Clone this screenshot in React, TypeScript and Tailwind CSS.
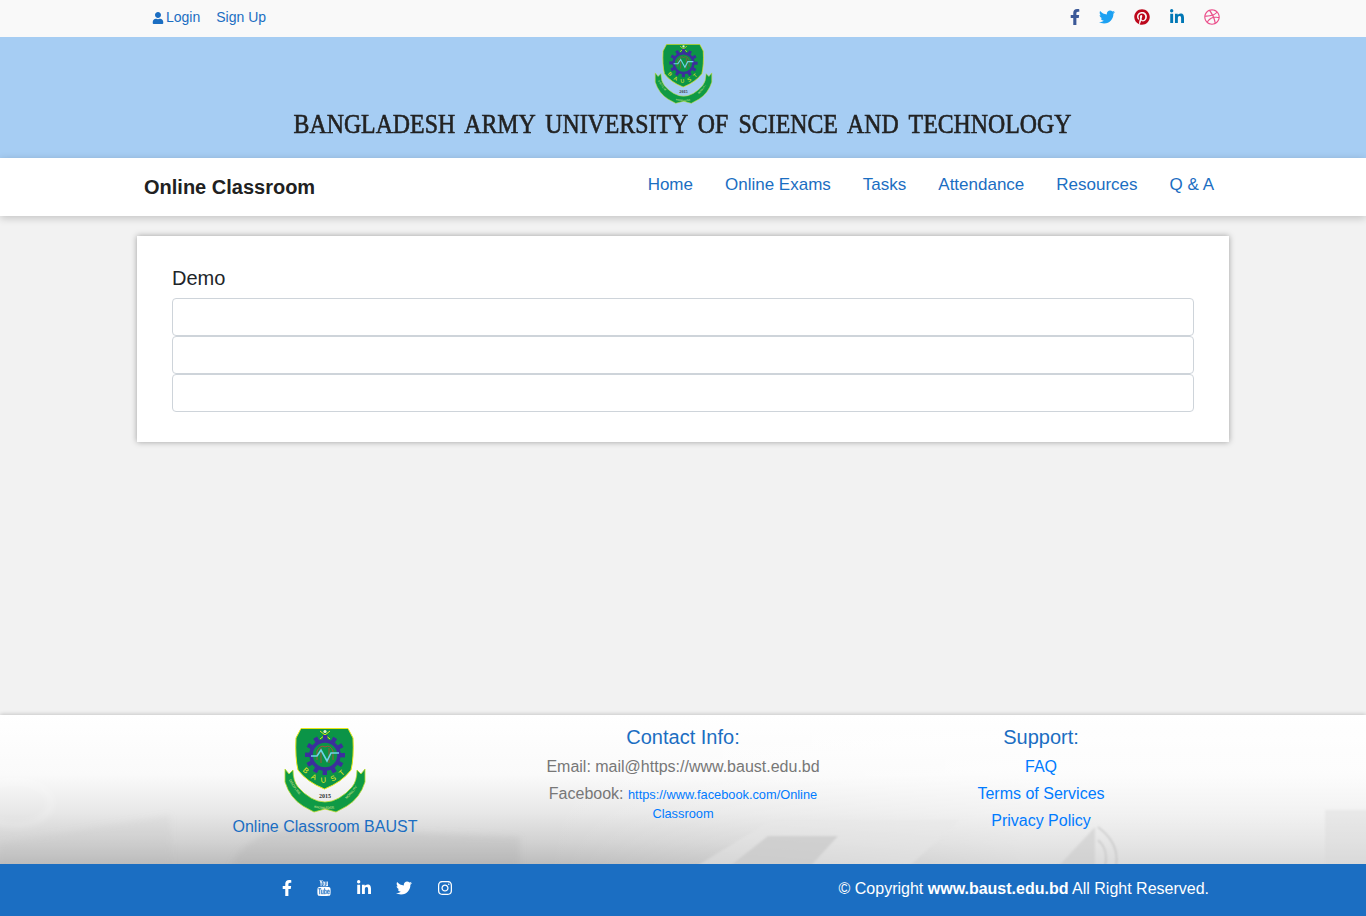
import { type ReactNode } from "react";
import {
  FaDribbble,
  FaFacebookF,
  FaInstagram,
  FaLinkedinIn,
  FaPinterest,
  FaTwitter,
  FaUser,
} from "react-icons/fa";
import { TfiYoutube } from "react-icons/tfi";

/** University crest, drawn on an 82x84 box */
function Crest({ className }: { className?: string }) {
  const teeth = Array.from({ length: 12 }, (_, i) => i * 30);
  return (
    <svg viewBox="0 0 82 85" className={className}>
      <defs>
        <path id="baust-arc" d="M17 41 Q41 68 65 41" />
        <path id="ribbon-left" d="M5 52 Q11 64 22 73" />
        <path id="ribbon-mid" d="M28 79 Q41 83 56 79" />
        <path id="ribbon-right" d="M60 73 Q72 63 77 52" />
      </defs>
      <path
        d="M1 41 L5 46 L9 42 Q9 53 14 59 Q20 66 27 70 Q34 74 41 74 Q48 74 55 70 Q62 66 68 59 Q73 53 73 42 L77 46 L81 41 L81 54 Q76 70 63 78 L52 84 L41 81 L30 84 L19 78 Q6 70 1 54 Z"
        fill="#0f9a45"
        stroke="#b9dc2c"
        strokeWidth="0.8"
      />
      <path
        d="M17 0.5 L64 0.5 L69 10 Q70 30 67 42 Q58 54 40.5 61 Q23 54 14 42 Q11 30 12 10 Z"
        fill="#0b9447"
        stroke="#e6e619"
        strokeWidth="1"
      />
      <path d="M36 3 L46 11 M46 3 L36 11" stroke="#e6e619" strokeWidth="1" />
      <circle cx="41" cy="3.5" r="1.6" fill="#e8f4d0" />
      <g fill="#3b2f9c">
        {teeth.map((deg) => (
          <rect key={deg} x="39" y="7" width="4.4" height="6" transform={`rotate(${deg} 41 27)`} />
        ))}
      </g>
      <circle cx="41" cy="27" r="14" fill="#0b9447" stroke="#3b2f9c" strokeWidth="3.5" />
      <path
        d="M33 32 L33 23 Q37 16 41 19 Q46 16 49 23 L49 32 M37 35 L37 20 M45 35 L45 20"
        fill="none"
        stroke="#a5503a"
        strokeWidth="1"
      />
      <path
        d="M27 28 L33 28 L37 22 L43 33 L47 25 L55 25"
        fill="none"
        stroke="#6fd3ea"
        strokeWidth="1.6"
      />
      <text fontFamily="'Liberation Sans', sans-serif" fontSize="7.5" fill="#f0ea20" letterSpacing="6">
        <textPath href="#baust-arc" startOffset="2">
          BAUST
        </textPath>
      </text>
      <text
        x="41"
        y="70"
        textAnchor="middle"
        fontFamily="'Liberation Serif', serif"
        fontWeight="700"
        fontSize="6"
        fill="#333"
      >
        2015
      </text>
      <g fontFamily="'Liberation Sans', sans-serif" fontSize="3.2" fill="#e8ef9a">
        <text>
          <textPath href="#ribbon-left">DISCIPLINE</textPath>
        </text>
        <text>
          <textPath href="#ribbon-mid" startOffset="2">
            KNOWLEDGE
          </textPath>
        </text>
        <text>
          <textPath href="#ribbon-right" startOffset="3">
            MORALITY
          </textPath>
        </text>
      </g>
    </svg>
  );
}

function TopBar() {
  return (
    <div className="h-[37px] bg-[#f9f9f9] flex items-center pb-[2px] pl-[152px] pr-[146px] text-[14px] text-[#1b6ec2]">
      <a className="flex items-center gap-[2px]">
        <FaUser className="text-[12px]" />
        Login
      </a>
      <a className="ml-[16px]">Sign Up</a>
      <div className="ml-auto flex items-center text-[16px] -mt-[1px]">
        <FaFacebookF className="text-[#3b5998]" />
        <FaTwitter className="text-[#1da1f2] ml-[16px]" />
        <FaPinterest className="text-[#bd081c] ml-[19px]" />
        <FaLinkedinIn className="text-[#0077b5] ml-[19px]" />
        <FaDribbble className="text-[#ea4c89] ml-[19px]" />
      </div>
    </div>
  );
}

function Banner() {
  return (
    <div className="h-[121px] bg-[#a6cdf3] flex flex-col items-center pt-[7px]">
      <Crest className="w-[59px] h-[60px]" />
      <h1 className="mt-[3px] scale-x-[0.883] font-['Liberation_Serif',serif] text-[27px] leading-[34px] text-[#222] [word-spacing:5px] [-webkit-text-stroke:0.6px_#222] whitespace-nowrap">
        BANGLADESH ARMY UNIVERSITY OF SCIENCE AND TECHNOLOGY
      </h1>
    </div>
  );
}

function NavBar() {
  const links = ["Home", "Online Exams", "Tasks", "Attendance", "Resources", "Q & A"];
  return (
    <nav className="relative h-[58px] bg-white shadow-[0_2px_8px_rgba(0,0,0,0.2)] flex pl-[144px] pr-[152px]">
      <span className="mt-[17px] text-[20px] leading-[24px] font-bold text-[#212121]">
        Online Classroom
      </span>
      <ul className="ml-auto flex gap-[32px] pt-[16px] text-[17px] leading-[22px] text-[#1b6ec2]">
        {links.map((link) => (
          <li key={link}>{link}</li>
        ))}
      </ul>
    </nav>
  );
}

function DemoCard() {
  return (
    <section className="w-[1092px] mx-auto mt-[20px] bg-white shadow-[0_0_6px_rgba(0,0,0,0.35)] px-[35px] pt-[30px] pb-[30px]">
      <h2 className="text-[20px] leading-[24px] text-[#212529] mb-[8px]">Demo</h2>
      {[0, 1, 2].map((row) => (
        <div key={row} className="h-[38px] bg-white border border-[#ced4da] rounded-[4px]" />
      ))}
    </section>
  );
}

/** Faded laptop photo behind the footer */
function FooterBackdrop() {
  return (
    <svg
      viewBox="0 0 1366 149"
      preserveAspectRatio="none"
      className="absolute inset-0 w-full h-full"
    >
      <defs>
        <linearGradient id="footer-fade" x1="0" y1="0" x2="0" y2="1">
          <stop offset="0" stopColor="#ffffff" />
          <stop offset="0.4" stopColor="#fafafa" />
          <stop offset="0.65" stopColor="#e8e8e8" />
          <stop offset="0.85" stopColor="#d2d2d2" />
          <stop offset="1" stopColor="#bdbdbd" />
        </linearGradient>
        <linearGradient id="footer-right" x1="0" y1="0" x2="1" y2="0">
          <stop offset="0.4" stopColor="#ffffff" stopOpacity="0" />
          <stop offset="0.75" stopColor="#ffffff" stopOpacity="0.45" />
        </linearGradient>
        <filter id="footer-soft" x="-5%" y="-20%" width="110%" height="140%">
          <feGaussianBlur stdDeviation="3" />
        </filter>
        <filter id="footer-softer" x="-5%" y="-20%" width="110%" height="140%">
          <feGaussianBlur stdDeviation="1" />
        </filter>
      </defs>
      <rect width="1366" height="149" fill="url(#footer-fade)" />
      <g filter="url(#footer-soft)">
        <ellipse cx="15" cy="88" rx="36" ry="22" fill="none" stroke="#ffffff" strokeOpacity="0.5" strokeWidth="2" />
        <path d="M0 128 L170 100 L172 155 L0 155 Z" fill="#b8b8b8" fillOpacity="0.12" />
        <path d="M230 155 Q240 118 300 112 L520 122 L520 155 Z" fill="#9c9c9c" fillOpacity="0.18" />
      </g>
      <rect width="1366" height="149" fill="url(#footer-right)" />
      <g filter="url(#footer-softer)">
        <path d="M690 155 L772 105 L960 105 L905 155 Z" fill="#e6e6e6" fillOpacity="0.45" />
        <path d="M725 155 L768 121 L838 121 L807 155 Z" fill="#c8c8c8" fillOpacity="0.7" />
        <path d="M1055 155 L1095 112 L1095 155 Z" fill="#c8c8c8" fillOpacity="0.5" />
        <path
          d="M1098 112 Q1122 130 1115 155 M1098 125 Q1110 135 1104 155"
          fill="none"
          stroke="#a8a8a8"
          strokeOpacity="0.6"
          strokeWidth="1.2"
        />
        <rect x="1325" y="95" width="46" height="60" fill="#d6d6d6" fillOpacity="0.35" />
      </g>
    </svg>
  );
}

function FooterLink({ children }: { children: ReactNode }) {
  return <a className="block text-[16px] leading-[24px] mb-[3px] text-[#007bff]">{children}</a>;
}

function Footer() {
  return (
    <footer className="relative h-[149px] shadow-[0_-1px_4px_rgba(0,0,0,0.18)]">
      <FooterBackdrop />
      <div className="relative w-[1074px] mx-auto grid grid-cols-3 text-center">
        <div className="flex flex-col items-center pt-[13px]">
          <Crest className="w-[82px] h-[85px]" />
          <span className="mt-[2px] text-[16px] leading-[24px] text-[#1b6ec2]">
            Online Classroom BAUST
          </span>
        </div>
        <div className="pt-[10px]">
          <h3 className="text-[20px] leading-[24px] text-[#1b6ec2] mb-[6px]">Contact Info:</h3>
          <p className="text-[16px] leading-[24px] mb-[3px] text-[#777]">
            Email: mail@https://www.baust.edu.bd
          </p>
          <p className="text-[16px] leading-[18px] text-[#777] pt-[3px]">
            Facebook:{" "}
            <a className="text-[12.8px] leading-[19px] text-[#007bff]">
              https://www.facebook.com/Online
              <br />
              Classroom
            </a>
          </p>
        </div>
        <div className="pt-[10px]">
          <h3 className="text-[20px] leading-[24px] text-[#1b6ec2] mb-[6px]">Support:</h3>
          <FooterLink>FAQ</FooterLink>
          <FooterLink>Terms of Services</FooterLink>
          <FooterLink>Privacy Policy</FooterLink>
        </div>
      </div>
    </footer>
  );
}

function CopyrightBar() {
  return (
    <div className="relative h-[52px] bg-[#1b6ec2] flex items-center pb-[2px] pl-[279px] pr-[157px] text-white">
      <div className="flex items-center text-[16px] -mt-[2px]">
        <FaFacebookF />
        <TfiYoutube className="ml-[21px]" />
        <FaLinkedinIn className="ml-[24px]" />
        <FaTwitter className="ml-[24px]" />
        <FaInstagram className="ml-[25px]" />
      </div>
      <p className="ml-auto text-[16px]">
        © Copyright <strong className="font-bold">www.baust.edu.bd</strong> All Right Reserved.
      </p>
    </div>
  );
}

export default function App() {
  return (
    <div className="min-h-[916px] flex flex-col bg-[#f2f2f2] font-['Liberation_Sans',Arial,sans-serif]">
      <TopBar />
      <Banner />
      <NavBar />
      <main className="flex-1">
        <DemoCard />
      </main>
      <Footer />
      <CopyrightBar />
    </div>
  );
}
